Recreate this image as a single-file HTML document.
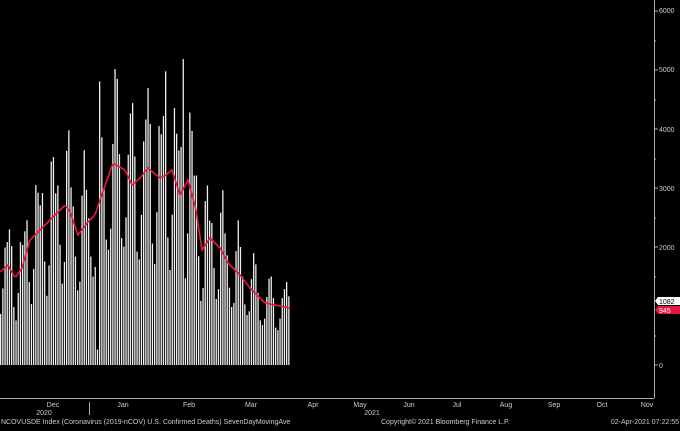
<!DOCTYPE html>
<html><head><meta charset="utf-8"><style>
body{margin:0;background:#000;width:680px;height:426px;overflow:hidden;font-family:"Liberation Sans",sans-serif;}
svg text{font-family:"Liberation Sans",sans-serif;}
</style></head><body>
<svg id="c" width="680" height="426" xmlns="http://www.w3.org/2000/svg">
<rect width="680" height="426" fill="#000"/>
<g id="bars"></g>
<polyline id="ma" fill="none" stroke="#e8173f" stroke-width="1.6" points=""/>
<line x1="654.5" y1="0" x2="654.5" y2="398" stroke="#aaa" stroke-width="1"/>
<line x1="0" y1="398.5" x2="654" y2="398.5" stroke="#aaa" stroke-width="1"/>
<g fill="#ccc" font-size="7">
<text x="659" y="13">6000</text><text x="659" y="72">5000</text><text x="659" y="132">4000</text>
<text x="659" y="191">3000</text><text x="659" y="250">2000</text><text x="659" y="368">0</text>
</g>
<g stroke="#aaa"><line x1="654" y1="11" x2="658" y2="11"/><line x1="654" y1="70" x2="658" y2="70"/><line x1="654" y1="129" x2="658" y2="129"/><line x1="654" y1="188" x2="658" y2="188"/><line x1="654" y1="247" x2="658" y2="247"/><line x1="654" y1="365" x2="658" y2="365"/>
<line x1="654" y1="41" x2="656" y2="41"/><line x1="654" y1="100" x2="656" y2="100"/><line x1="654" y1="159" x2="656" y2="159"/><line x1="654" y1="218" x2="656" y2="218"/><line x1="654" y1="277" x2="656" y2="277"/><line x1="654" y1="336" x2="656" y2="336"/>
<line x1="89.5" y1="402" x2="89.5" y2="415"/></g>
<polygon points="655,301 658,297 680,297 680,305 658,305" fill="#fff"/>
<text x="659" y="304" font-size="7" fill="#000">1082</text>
<polygon points="655,310 658,306 680,306 680,314 658,314" fill="#e8173f"/>
<text x="659" y="313" font-size="7" fill="#fff">945</text>
<g fill="#ccc" font-size="7" text-anchor="middle">
<text x="53" y="407">Dec</text><text x="123" y="407">Jan</text><text x="189" y="407">Feb</text><text x="251" y="407">Mar</text><text x="313" y="407">Apr</text><text x="360" y="407">May</text><text x="409" y="407">Jun</text><text x="457" y="407">Jul</text><text x="506" y="407">Aug</text><text x="554" y="407">Sep</text><text x="602" y="407">Oct</text><text x="647" y="407">Nov</text>
<text x="44" y="415">2020</text><text x="372" y="415">2021</text>
</g>
<g fill="#ccc" font-size="7">
<text x="1" y="424">NCOVUSDE Index (Coronavirus (2019-nCOV) U.S. Confirmed Deaths) SevenDayMovingAve</text>
<text x="381" y="424">Copyright© 2021 Bloomberg Finance L.P.</text>
<text x="679" y="424" text-anchor="end">02-Apr-2021 07:22:55</text>
</g>
</svg>
<script>
var k=[[0,272],[8,265],[15,278],[22,268],[30,240],[40,230],[55,215],[65,205],[70,212],[78,235],[88,222],[95,215],[100,200],[113,163],[125,170],[132,185],[140,178],[148,168],[160,178],[166,175],[172,170],[180,195],[188,180],[196,210],[202,250],[210,238],[220,248],[228,263],[240,275],[250,288],[265,303],[280,306],[290,308]];
function ma(x){for(var i=0;i<k.length-1;i++){if(x<=k[i+1][0]){var t=(x-k[i][0])/(k[i+1][0]-k[i][0]);return k[i][1]+t*(k[i+1][1]-k[i][1]);}}return k[k.length-1][1];}
var f=[0.55,0.72,1.25,1.4,1.3,1.15,0.7],g="",pts=[];
for(var i=0;i<132;i++){var x=i*2.2;var y=ma(x);var v=365-y;var s=f[i%7]*(1+0.12*Math.sin(i*1.7));if(i==45||i==83)s=1.75;if(i==75)s=1.55;if(i==44)s=0.1;var h=Math.min(v*s,360);
g+='<rect x="'+x.toFixed(1)+'" y="'+(365-h).toFixed(1)+'" width="1.3" height="'+h.toFixed(1)+'" fill="#eee"/>';}
for(var x=0;x<=290;x+=2)pts.push(x+','+ma(x).toFixed(1));
document.getElementById('bars').innerHTML=g;
document.getElementById('ma').setAttribute('points',pts.join(' '));
</script>
</body></html>
